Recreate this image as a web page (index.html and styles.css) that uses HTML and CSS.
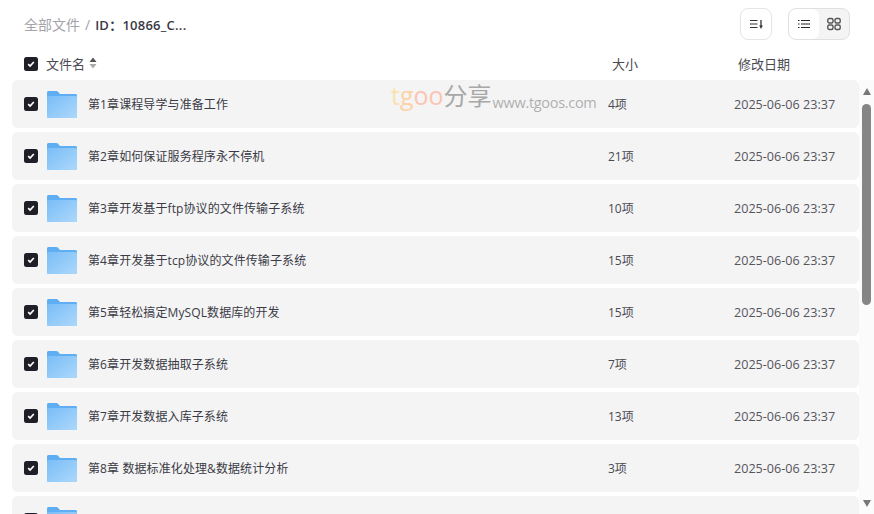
FILE: index.html
```html
<!DOCTYPE html>
<html lang="zh-CN">
<head>
    <meta charset="UTF-8">
    <meta name="viewport" content="width=device-width, initial-scale=1.0">
    <title>全部文件</title>
    <link rel="stylesheet" href="styles.css">
</head>
<body>

<svg class="svg-defs" width="0" height="0">
    <defs>
        <linearGradient id="folder-back" x1="0" y1="0" x2="0" y2="1">
            <stop offset="0" stop-color="#5eadf2"/>
            <stop offset="1" stop-color="#6cb6f5"/>
        </linearGradient>
        <linearGradient id="folder-front" x1="0" y1="0" x2="1" y2="1">
            <stop offset="0" stop-color="#79bdf7"/>
            <stop offset="1" stop-color="#acd8fb"/>
        </linearGradient>
        <symbol id="folder" viewBox="0 0 30 27">
            <path d="M0 1.500C0 .7.7 0 1.500 0h8c.6 0 1.100.3 1.500.7L13 3h15.500c.8 0 1.500.7 1.500 1.500V25.500c0 .8-.7 1.500-1.500 1.500H1.500C.7 27 0 26.300 0 25.500z" fill="url(#folder-back)"/>
            <path d="M0 6.500C0 5.700.7 5 1.500 5h27c.8 0 1.500.7 1.500 1.500v19c0 .8-.7 1.500-1.500 1.500h-27C.7 27 0 26.300 0 25.500z" fill="url(#folder-front)"/>
        </symbol>
        <symbol id="check" viewBox="0 0 14 14">
            <rect width="14" height="14" rx="2.500" fill="#1f1f27"/>
            <path d="M4.200 7.200l1.900 1.900 3.700-4.100" fill="none" stroke="#fff" stroke-width="1.700"/>
        </symbol>
    </defs>
</svg>

<div class="toolbar">
    <div class="breadcrumb">
        <span class="crumb-root">全部文件</span>
        <span class="crumb-sep">/</span>
        <span class="crumb-current">ID：10866_C...</span>
    </div>
    <div class="toolbar-actions">
        <button class="icon-button">
            <svg width="16" height="16" viewBox="0 0 16 16" fill="none" stroke="#333" stroke-width="1.200">
                <path d="M2 4.500h7.500M2 8h7.500M2 11.500h7.500"/>
                <path d="M13 4v6" stroke-width="1.300"/>
                <path d="M11.200 9.500h3.600L13 13z" fill="#333" stroke="none"/>
            </svg>
        </button>
        <div class="view-switch">
            <button class="view-option view-active">
                <svg width="14" height="14" viewBox="0 0 14 14" fill="none" stroke="#222" stroke-width="1.100">
                    <path d="M4 3.500h9M4 7h9M4 10.500h9"/>
                    <path d="M1 3.500h1.500M1 7h1.500M1 10.500h1.500"/>
                </svg>
            </button>
            <button class="view-option">
                <svg width="14" height="14" viewBox="0 0 14 14" fill="none" stroke="#555" stroke-width="1.400">
                    <rect x=".8" y="1.500" width="5.200" height="4.500" rx="1.500"/>
                    <rect x="8" y="1.500" width="5.200" height="4.500" rx="1.500"/>
                    <rect x=".8" y="8" width="5.200" height="4.500" rx="1.500"/>
                    <rect x="8" y="8" width="5.200" height="4.500" rx="1.500"/>
                </svg>
            </button>
        </div>
    </div>
</div>

<div class="table-head">
    <svg class="checkbox" width="14" height="14"><use href="#check"/></svg>
    <div class="head-name">文件名
        <svg class="sort-mark" width="8" height="12" viewBox="0 0 8 12">
            <path d="M4 .5L7.500 5H.5z" fill="#555"/>
            <path d="M4 11.500L.5 7h7z" fill="#aaa"/>
        </svg>
    </div>
    <div class="head-size">大小</div>
    <div class="head-date">修改日期</div>
</div>

<div class="list-area">
    <div class="file-list">
        <div class="file-row">
            <svg class="checkbox" width="14" height="14"><use href="#check"/></svg>
            <svg class="folder" width="30" height="27"><use href="#folder"/></svg>
            <div class="file-name">第1章课程导学与准备工作</div>
            <div class="file-size">4项</div>
            <div class="file-date">2025-06-06 23:37</div>
        </div>
        <div class="file-row">
            <svg class="checkbox" width="14" height="14"><use href="#check"/></svg>
            <svg class="folder" width="30" height="27"><use href="#folder"/></svg>
            <div class="file-name">第2章如何保证服务程序永不停机</div>
            <div class="file-size">21项</div>
            <div class="file-date">2025-06-06 23:37</div>
        </div>
        <div class="file-row">
            <svg class="checkbox" width="14" height="14"><use href="#check"/></svg>
            <svg class="folder" width="30" height="27"><use href="#folder"/></svg>
            <div class="file-name">第3章开发基于ftp协议的文件传输子系统</div>
            <div class="file-size">10项</div>
            <div class="file-date">2025-06-06 23:37</div>
        </div>
        <div class="file-row">
            <svg class="checkbox" width="14" height="14"><use href="#check"/></svg>
            <svg class="folder" width="30" height="27"><use href="#folder"/></svg>
            <div class="file-name">第4章开发基于tcp协议的文件传输子系统</div>
            <div class="file-size">15项</div>
            <div class="file-date">2025-06-06 23:37</div>
        </div>
        <div class="file-row">
            <svg class="checkbox" width="14" height="14"><use href="#check"/></svg>
            <svg class="folder" width="30" height="27"><use href="#folder"/></svg>
            <div class="file-name">第5章轻松搞定MySQL数据库的开发</div>
            <div class="file-size">15项</div>
            <div class="file-date">2025-06-06 23:37</div>
        </div>
        <div class="file-row">
            <svg class="checkbox" width="14" height="14"><use href="#check"/></svg>
            <svg class="folder" width="30" height="27"><use href="#folder"/></svg>
            <div class="file-name">第6章开发数据抽取子系统</div>
            <div class="file-size">7项</div>
            <div class="file-date">2025-06-06 23:37</div>
        </div>
        <div class="file-row">
            <svg class="checkbox" width="14" height="14"><use href="#check"/></svg>
            <svg class="folder" width="30" height="27"><use href="#folder"/></svg>
            <div class="file-name">第7章开发数据入库子系统</div>
            <div class="file-size">13项</div>
            <div class="file-date">2025-06-06 23:37</div>
        </div>
        <div class="file-row">
            <svg class="checkbox" width="14" height="14"><use href="#check"/></svg>
            <svg class="folder" width="30" height="27"><use href="#folder"/></svg>
            <div class="file-name">第8章 数据标准化处理&amp;数据统计分析</div>
            <div class="file-size">3项</div>
            <div class="file-date">2025-06-06 23:37</div>
        </div>
        <div class="file-row">
            <svg class="checkbox" width="14" height="14"><use href="#check"/></svg>
            <svg class="folder" width="30" height="27"><use href="#folder"/></svg>
        </div>
    </div>
    <div class="scrollbar">
        <div class="arrow-up"></div>
        <div class="thumb"></div>
        <div class="arrow-down"></div>
    </div>
</div>

<div class="watermark">
    <span class="wm-t">t</span><span class="wm-g">g</span><span class="wm-o">oo</span><span class="wm-cn">分享</span><span class="wm-url">www.tgoos.com</span>
</div>

</body>
</html>
```

FILE: styles.css
```css
html, body {
    height: 100%;
}

body {
    margin: 0;
    position: relative;
    height: 514px;
    overflow: hidden;
    background-color: #ffffff;
    color: #3a3a44;
    font-family: 'Open Sans', 'Noto Sans CJK SC', sans-serif;
    font-size: 12px;
}

.svg-defs {
    position: absolute;
}

.toolbar {
    height: 32px;
    padding: 8px 24px 0;
    display: flex;
    align-items: center;
    justify-content: space-between;
}

.breadcrumb {
    display: flex;
    align-items: center;
    gap: 5px;
    font-size: 14px;
}

.crumb-root {
    color: #a3a3a8;
}

.crumb-sep {
    color: #a3a3a8;
}

.crumb-current {
    color: #3a3a44;
    font-size: 13px;
    font-weight: 600;
    letter-spacing: 0.250px;
}

.toolbar-actions {
    display: flex;
    gap: 16px;
}

.icon-button {
    width: 32px;
    height: 32px;
    padding: 0;
    display: flex;
    align-items: center;
    justify-content: center;
    background-color: #fff;
    border: 1px solid #e5e5e7;
    border-radius: 8px;
}

.view-switch {
    width: 62px;
    height: 32px;
    box-sizing: border-box;
    display: flex;
    background-color: #f4f4f5;
    border: 1px solid #e0e0e2;
    border-radius: 8px;
    overflow: hidden;
}

.view-option {
    flex: 1;
    padding: 0;
    display: flex;
    align-items: center;
    justify-content: center;
    background: none;
    border: none;
}

.view-active {
    background-color: #fff;
    border-radius: 7px;
}

.table-head {
    height: 34px;
    padding: 6px 0 0 24px;
    display: flex;
    align-items: center;
    font-size: 13px;
    color: #4a4a52;
}

.table-head .checkbox {
    margin-top: 2px;
}

.checkbox {
    flex: none;
}

.head-name {
    width: 566px;
    margin-left: 8px;
    display: flex;
    align-items: center;
    gap: 4px;
}

.head-size {
    width: 126px;
}

.list-area {
    height: 434px;
    display: flex;
    overflow: hidden;
}

.file-list {
    width: 847px;
    margin-left: 12px;
    display: flex;
    flex-direction: column;
    gap: 4px;
}

.file-row {
    flex: none;
    height: 48px;
    padding-left: 12px;
    display: flex;
    align-items: center;
    background-color: #f4f4f5;
    border-radius: 6px;
}

.folder {
    flex: none;
    margin-left: 9px;
}

.file-name {
    width: 520px;
    margin-left: 11px;
    margin-bottom: 1px;
    letter-spacing: 0.100px;
    color: #3a3a44;
}

.file-size {
    width: 126px;
    margin-bottom: 1px;
    color: #4a4a52;
}

.file-date {
    font-size: 12.600px;
    color: #55555c;
}

.scrollbar {
    flex: none;
    width: 15px;
    background-color: #fbfbfb;
    display: flex;
    flex-direction: column;
    align-items: center;
}

.arrow-up {
    margin-top: 8px;
    width: 0;
    height: 0;
    border-left: 4.500px solid transparent;
    border-right: 4.500px solid transparent;
    border-bottom: 7px solid #777;
}

.thumb {
    margin-top: 9px;
    width: 9px;
    height: 201px;
    background-color: #858585;
    border-radius: 5px;
}

.arrow-down {
    margin-top: auto;
    margin-bottom: 7px;
    width: 0;
    height: 0;
    border-left: 4.500px solid transparent;
    border-right: 4.500px solid transparent;
    border-top: 7px solid #777;
}

.watermark {
    position: absolute;
    left: 391px;
    top: 77px;
    display: flex;
    align-items: baseline;
    font-family: 'Open Sans', 'Noto Sans CJK SC', sans-serif;
    font-size: 25px;
}

.wm-t {
    color: #fbe2ad;
}

.wm-g {
    color: #fcd3a8;
}

.wm-o {
    color: #fcc4b2;
}

.wm-cn {
    font-size: 24px;
    color: #a8a8a8;
}

.wm-url {
    position: relative;
    top: 3px;
    margin-left: 1px;
    font-size: 14.500px;
    letter-spacing: -0.300px;
    color: #b0b0b0;
}
```
